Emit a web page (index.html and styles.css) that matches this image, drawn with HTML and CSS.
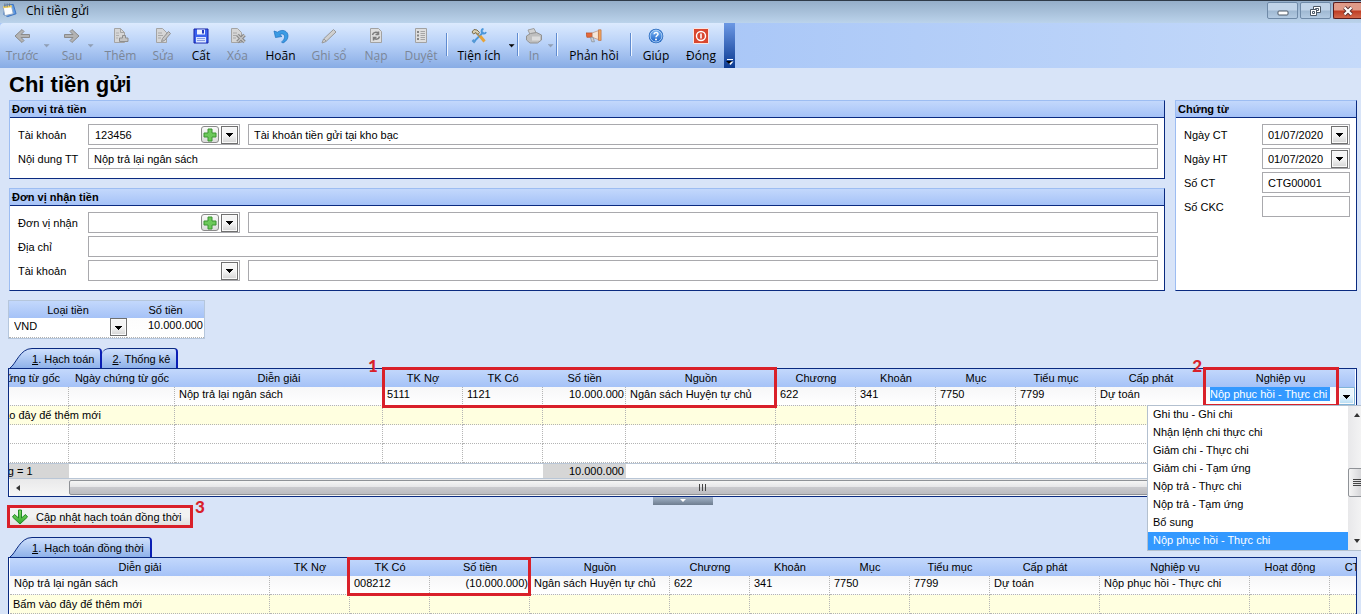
FILE: index.html
```html
<!DOCTYPE html>
<html lang="vi">
<head>
<meta charset="utf-8">
<title>Chi tiền gửi</title>
<link rel="stylesheet" href="styles.css">
</head>
<body>
<svg class="defs" aria-hidden="true">
  <defs>
    <linearGradient id="gTab" x1="0" y1="0" x2="0" y2="1"><stop offset="0" stop-color="#cfe0fc"/><stop offset="1" stop-color="#8fb2ea"/></linearGradient>
    <linearGradient id="gGreen" x1="0" y1="0" x2="0" y2="1"><stop offset="0" stop-color="#8be06a"/><stop offset="1" stop-color="#2fa52c"/></linearGradient>
    <linearGradient id="gHelp" x1="0" y1="0" x2="0" y2="1"><stop offset="0" stop-color="#7fb8f4"/><stop offset="1" stop-color="#1b63c8"/></linearGradient>
    <symbol id="plus" viewBox="0 0 14 14"><path d="M5 1h4v4h4v4H9v4H5V9H1V5h4z" fill="#6cc95a" stroke="#3a9430"/></symbol>
    <symbol id="caret" viewBox="0 0 8 5"><path d="M0 0h7v1H6v1H5v1H4v1H3V3H2V2H1V1H0z" fill="currentColor"/></symbol>
  </defs>
</svg>

<header class="titlebar">
  <svg class="app-icon" viewBox="0 0 16 16"><path d="M3 3l9-1 3 10-9 3-4-2z" fill="#5d9be6" stroke="#3a6fbd"/><path d="M1 4l9-1 2 9-9 2z" fill="#fdfdfd" stroke="#8fa6c4"/><path d="M1 4l9-1 .5 2L1.500 6z" fill="#f3cf58"/><path d="M3 1v4M5.500 1v4M8 1v3" stroke="#69788c"/></svg>
  <span class="titlebar-text">Chi tiền gửi</span>
  <button class="win-btn" aria-label="Thu nhỏ"><svg width="12" height="12" viewBox="0 0 12 12"><rect x="1" y="6" width="10" height="4" rx="1" fill="#fff" stroke="#4c5866"/></svg></button>
  <button class="win-btn" aria-label="Khôi phục"><svg width="13" height="12" viewBox="0 0 13 12"><path d="M4.500 1.500h7v6h-7z" fill="#fff" stroke="#4c5866"/><path d="M6.500 3.500h3v2h-3z" fill="none" stroke="#4c5866"/><path d="M1.500 4.500h6v6h-6z" fill="#fff" stroke="#4c5866"/><path d="M3.500 6.500h2v2h-2z" fill="none" stroke="#4c5866"/></svg></button>
  <button class="win-btn win-close" aria-label="Đóng cửa sổ"><svg width="12" height="10" viewBox="0 0 12 10"><path d="M2.500 1.500l7 7M9.500 1.500l-7 7" stroke="#5b3030" stroke-width="4"/><path d="M2.500 1.500l7 7M9.500 1.500l-7 7" stroke="#fff" stroke-width="2.200"/></svg></button>
</header>

<nav class="toolbar-row">
  <div class="toolbar">
    <button class="tool" disabled><svg viewBox="0 0 16 16"><path d="M8 1.500L1 8l7 6.500 2-2-3-3h8.500v-3H7l3-3z" fill="#b3b3b3" stroke="#8b8b8b"/></svg>Trước</button>
    <span class="drop off"><svg><use href="#caret"/></svg></span>
    <button class="tool" disabled><svg viewBox="0 0 16 16"><path d="M8 1.500L15 8l-7 6.500-2-2 3-3H.5v-3H9l-3-3z" fill="#b3b3b3" stroke="#8b8b8b"/></svg>Sau</button>
    <span class="drop off"><svg><use href="#caret"/></svg></span>
    <button class="tool" disabled><svg viewBox="0 0 16 16"><path d="M1.500 .5h6l4 4v10h-10z" fill="#d6d6d6" stroke="#a4a4a4"/><path d="M7.500 .5v4h4" fill="none" stroke="#a4a4a4"/><path d="M3 5h3M3 7.500h3M3 10h2" stroke="#b0b0b0"/><path d="M9.500 7.500h3v2.500H15v3.500H6.500V10h3z" fill="#c4c4c4" stroke="#8f8f8f"/></svg>Thêm</button>
    <button class="tool" disabled><svg viewBox="0 0 16 16"><path d="M1.500 .5h6l4 4v10h-10z" fill="#d6d6d6" stroke="#a4a4a4"/><path d="M3 5h4M3 7.500h5M3 10h3" stroke="#a8a8a8"/><path d="M13.500 3.500l2 2-6 7-3 1 1-3z" fill="#c6c6c6" stroke="#909090"/></svg>Sửa</button>
    <button class="tool"><svg viewBox="0 0 16 16"><path d="M1 1h14v14H1z" fill="#3b63ee" stroke="#1720a5"/><path d="M4 1.500h8v5H4z" fill="#eef3ff"/><path d="M9 2h2v3.500H9z" fill="#2338bd"/><path d="M3 9h10v5.500H3z" fill="#dbe6ff"/><path d="M4 10.500h8M4 12.500h8" stroke="#879be0"/></svg>Cất</button>
    <button class="tool" disabled><svg viewBox="0 0 16 16"><path d="M1.500 .5h6l4 4v10h-10z" fill="#d6d6d6" stroke="#a4a4a4"/><path d="M3 5h4M3 7.500h4M3 10h3" stroke="#a8a8a8"/><path d="M7.500 7l7 7M14.500 7l-7 7" stroke="#858585" stroke-width="3.500"/><path d="M7.500 7l7 7M14.500 7l-7 7" stroke="#c4c4c4" stroke-width="1.500"/></svg>Xóa</button>
    <button class="tool"><svg viewBox="0 0 16 16"><path d="M1 3l1.500 6.500L9 8.500 6.800 6.600C9.500 5 12 6.500 11.500 9.500c-.3 2-1.500 3.500-3 4.500l1.500 1c3-1.500 5-4 5-7C15 3 9.500.500 4.500 4.200z" fill="#3a9be4" stroke="#1c6fbd" stroke-width=".7"/></svg>Hoãn</button>
    <button class="tool" disabled><svg viewBox="0 0 16 16"><path d="M12.500 1.500l2.500 2.500-10 9.500-4 1.500 1.500-4z" fill="#d0d0d0" stroke="#989898"/><path d="M3 11l2 2" stroke="#989898"/></svg>Ghi sổ</button>
    <button class="tool" disabled><svg viewBox="0 0 16 16"><path d="M2.500 .5h8l3 3v11h-11z" fill="#dedede" stroke="#a2a2a2"/><path d="M4.500 7c.7-3 4-3.500 6-1.500V3.500M11.500 8.500c-.7 3-4 3.500-6 1.500v2.500M10.500 6.500h-3M5.500 9.500h3" fill="none" stroke="#7c7c7c" stroke-width="1.500"/></svg>Nạp</button>
    <button class="tool" disabled><svg viewBox="0 0 16 16"><path d="M2.500 .5h11v14h-11z" fill="#dedede" stroke="#a2a2a2"/><path d="M4 4h2M4 7.500h2M4 11h2" stroke="#858585" stroke-width="2"/><path d="M7.500 3.500h4.500M7.500 5.500h4.500M7.500 7.500h4.500M7.500 9.500h4.500M7.500 11.500h4.500" stroke="#a5a5a5"/></svg>Duyệt</button>
    <span class="sep"></span>
    <button class="tool"><svg viewBox="0 0 16 16"><path d="M3 13.500L12.500 4M12.500 1a2.300 2.300 0 1 0 2.500 3" fill="none" stroke="#4b97da" stroke-width="1.800"/><path d="M9 8l4.500 5.500" stroke="#e6a33a" stroke-width="3"/><path d="M5 5l4 4" stroke="#b98f45" stroke-width="1.500"/><path d="M1 4l2-2.500 3 .5 2.500 2.500-1.500 2-2-2L2.500 6z" fill="#d9d1b4" stroke="#7b6c49"/><path d="M1.500 12l2.500 2.500" stroke="#5599d5" stroke-width="2.500"/></svg>Tiện ích</button>
    <span class="drop"><svg><use href="#caret"/></svg></span>
    <span class="sep"></span>
    <button class="tool" disabled><svg viewBox="0 0 16 16"><path d="M2 2l6-1.500 2.500 5-6 2z" fill="#d2d2d2" stroke="#9d9d9d"/><path d="M.5 8l4-2.500 6-1 5 2.500v5l-4 3H4l-3.500-3z" fill="#bfbfbf" stroke="#929292"/><path d="M6 8.500h8v4H6z" fill="#dcdcdc"/></svg>In</button>
    <span class="drop off"><svg><use href="#caret"/></svg></span>
    <span class="sep"></span>
    <button class="tool"><svg viewBox="0 0 18 16"><path d="M0 4.500h7v5H1z" fill="#e5683a" stroke="#b2471b" stroke-width=".7"/><path d="M7 4.500L14 2v10L7 9.500z" fill="#f4e6d8" stroke="#b98467" stroke-width=".7"/><path d="M14 1h3v12h-3z" fill="#f0a35c" stroke="#b8673a" stroke-width=".7"/><path d="M5 9.500h3l1.500 5H6.500z" fill="#c9cdd2" stroke="#7d858e" stroke-width=".7"/></svg>Phản hồi</button>
    <span class="sep"></span>
    <button class="tool"><svg viewBox="0 0 16 16"><circle cx="8" cy="8" r="7.300" fill="#2065bd"/><circle cx="8" cy="8" r="6" fill="url(#gHelp)" stroke="#cce4ff" stroke-width=".8"/><path d="M6 6.300C6.200 3.600 10.300 4 10 6.300c-.2 1.200-2 1.400-2 3" fill="none" stroke="#fff" stroke-width="1.500"/><circle cx="8" cy="11.500" r="1" fill="#fff"/></svg>Giúp</button>
    <button class="tool"><svg viewBox="0 0 16 16"><path d="M.5 .5h15v15H.5z" fill="#d9472f" stroke="#fbe4df"/><circle cx="8" cy="8" r="4.500" fill="none" stroke="#fff" stroke-width="1.400"/><path d="M8 5.500v5" stroke="#fff" stroke-width="1.600"/></svg>Đóng</button>
  </div>
  <button class="toolbar-more" aria-label="Tùy chọn thanh công cụ"><svg width="8" height="8" viewBox="0 0 8 8"><path d="M1 1.500h6" stroke="#fff"/><path d="M1 3.500h6.500L4.500 7z" fill="#fff"/><path d="M0 3h6L3 6z" fill="#000"/></svg></button>
</nav>

<main class="content">
  <h1 class="page-title">Chi tiền gửi</h1>

  <div class="forms">
    <div class="forms-main">
      <section class="panel">
        <h2 class="panel-head">Đơn vị trả tiền</h2>
        <div class="panel-body">
          <div class="row">
            <label class="label" for="acc">Tài khoản</label>
            <div class="field combo"><input id="acc" class="wide-pad" value="123456"><button class="add" aria-label="Thêm tài khoản"><svg><use href="#plus"/></svg></button><button class="arrow" aria-label="Chọn tài khoản"><svg><use href="#caret"/></svg></button></div>
            <div class="field grow"><input aria-label="Tên tài khoản" value="Tài khoản tiền gửi tại kho bạc"></div>
          </div>
          <div class="row">
            <label class="label" for="desc">Nội dung TT</label>
            <div class="field grow"><input id="desc" value="Nộp trả lại ngân sách"></div>
          </div>
        </div>
      </section>
      <section class="panel">
        <h2 class="panel-head">Đơn vị nhận tiền</h2>
        <div class="panel-body">
          <div class="row">
            <label class="label" for="recv">Đơn vị nhận</label>
            <div class="field combo"><input id="recv"><button class="add" aria-label="Thêm đơn vị"><svg><use href="#plus"/></svg></button><button class="arrow" aria-label="Chọn đơn vị"><svg><use href="#caret"/></svg></button></div>
            <div class="field grow"><input aria-label="Tên đơn vị nhận"></div>
          </div>
          <div class="row">
            <label class="label" for="addr">Địa chỉ</label>
            <div class="field grow"><input id="addr"></div>
          </div>
          <div class="row">
            <label class="label" for="racc">Tài khoản</label>
            <div class="field combo"><select id="racc"><option></option></select><span class="arrow"><svg><use href="#caret"/></svg></span></div>
            <div class="field grow"><input aria-label="Tên tài khoản nhận"></div>
          </div>
        </div>
      </section>
    </div>
    <section class="panel panel-side">
      <h2 class="panel-head">Chứng từ</h2>
      <div class="panel-body">
        <div class="row"><label class="label" for="d1">Ngày CT</label><div class="field grow"><input id="d1" value="01/07/2020"><button class="arrow" aria-label="Chọn ngày CT"><svg><use href="#caret"/></svg></button></div></div>
        <div class="row"><label class="label" for="d2">Ngày HT</label><div class="field grow"><input id="d2" value="01/07/2020"><button class="arrow" aria-label="Chọn ngày HT"><svg><use href="#caret"/></svg></button></div></div>
        <div class="row"><label class="label" for="n1">Số CT</label><div class="field grow"><input id="n1" value="CTG00001"></div></div>
        <div class="row"><label class="label" for="n2">Số CKC</label><div class="field grow"><input id="n2"></div></div>
      </div>
    </section>
  </div>

  <table class="currency">
    <colgroup><col class="w-cur"><col></colgroup>
    <thead><tr><th>Loại tiền</th><th>Số tiền</th></tr></thead>
    <tbody><tr><td><div class="cur-select"><select aria-label="Loại tiền"><option>VND</option></select><span class="arrow"><svg><use href="#caret"/></svg></span></div></td><td class="num">10.000.000</td></tr></tbody>
  </table>

  <div class="tabs">
    <button class="tab"><svg class="slant" viewBox="0 0 22 20"><path d="M0 20C6 16 10 .5 22 .5V20z" fill="url(#gTab)"/><path d="M0 20C6 16 10 .5 22 .5" fill="none" stroke="#0a2a80"/></svg><span class="tab-text"><u>1</u>. Hạch toán</span></button>
    <button class="tab second"><span class="tab-text"><u>2</u>. Thống kê</span></button>
  </div>
  <div class="grid">
    <div class="grid-view">
      <table class="data scrolled">
        <colgroup><col class="w100"><col class="w106"><col class="w208"><col class="w80"><col class="w80"><col class="w83"><col class="w150"><col class="w80"><col class="w80"><col class="w80"><col class="w80"><col class="w110"><col></colgroup>
        <thead><tr><th>Số chứng từ gốc</th><th>Ngày chứng từ gốc</th><th>Diễn giải</th><th>TK Nợ</th><th>TK Có</th><th>Số tiền</th><th>Nguồn</th><th>Chương</th><th>Khoản</th><th>Mục</th><th>Tiểu mục</th><th>Cấp phát</th><th>Nghiệp vụ</th></tr></thead>
        <tbody>
          <tr class="entry"><td></td><td></td><td>Nộp trả lại ngân sách</td><td>5111</td><td>1121</td><td class="num">10.000.000</td><td>Ngân sách Huyện tự chủ</td><td>622</td><td>341</td><td>7750</td><td>7799</td><td>Dự toán</td><td><div class="cell-edit"><input aria-label="Nghiệp vụ" value="Nộp phục hồi - Thực chi"><button class="arrow hot" aria-label="Mở danh sách nghiệp vụ"><svg><use href="#caret"/></svg></button></div></td></tr>
          <tr class="new"><td class="spill">Bấm vào đây để thêm mới</td><td></td><td></td><td></td><td></td><td></td><td></td><td></td><td></td><td></td><td></td><td></td><td></td></tr>
          <tr><td></td><td></td><td></td><td></td><td></td><td></td><td></td><td></td><td></td><td></td><td></td><td></td><td></td></tr>
          <tr><td></td><td></td><td></td><td></td><td></td><td></td><td></td><td></td><td></td><td></td><td></td><td></td><td></td></tr>
        </tbody>
        <tfoot><tr><td class="sum">Số dòng = 1</td><td colspan="4"></td><td class="sum num">10.000.000</td><td colspan="7"></td></tr></tfoot>
      </table>
      <div class="hscroll"><span class="hs-arrow"></span><span class="hs-thumb"><i></i><i></i><i></i></span></div>
    </div>
    <span class="mark mark-a"></span><b class="mark-no no-a">1</b>
    <span class="mark mark-b"></span><b class="mark-no no-b">2</b>
    <div class="popup">
      <ul class="options" role="listbox" aria-label="Nghiệp vụ">
        <li role="option">Ghi thu - Ghi chi</li>
        <li role="option">Nhận lệnh chi thực chi</li>
        <li role="option">Giảm chi - Thực chi</li>
        <li role="option">Giảm chi - Tạm ứng</li>
        <li role="option">Nộp trả - Thực chi</li>
        <li role="option">Nộp trả - Tạm ứng</li>
        <li role="option">Bổ sung</li>
        <li role="option" aria-selected="true" class="selected">Nộp phục hồi - Thực chi</li>
      </ul>
      <div class="vscroll"><span class="vs-up"></span><span class="vs-thumb"><i></i><i></i><i></i><i></i></span><span class="vs-down"></span></div>
    </div>
  </div>

  <div class="splitter"><span class="splitter-grip"><i></i></span></div>

  <div class="action">
    <button class="update"><svg width="16" height="16" viewBox="0 0 16 16"><path d="M6.500 1h3v8l4-3.500L15.500 8 8 15 .5 8l2-2.500 4 3.500z" fill="url(#gGreen)" stroke="#218a22"/></svg>Cập nhật hạch toán đồng thời</button>
    <span class="mark mark-c"></span><b class="mark-no no-c">3</b>
  </div>

  <div class="tabs">
    <button class="tab"><svg class="slant" viewBox="0 0 22 20"><path d="M0 20C6 16 10 .5 22 .5V20z" fill="url(#gTab)"/><path d="M0 20C6 16 10 .5 22 .5" fill="none" stroke="#0a2a80"/></svg><span class="tab-text"><u>1</u>. Hạch toán đồng thời</span></button>
  </div>
  <div class="grid">
    <div class="grid-view">
      <table class="data">
        <colgroup><col class="w260"><col class="w80"><col class="w80"><col class="w100"><col class="w140"><col class="w80"><col class="w80"><col class="w80"><col class="w80"><col class="w110"><col class="w150"><col class="w80"><col class="w80"></colgroup>
        <thead><tr><th>Diễn giải</th><th>TK Nợ</th><th>TK Có</th><th>Số tiền</th><th>Nguồn</th><th>Chương</th><th>Khoản</th><th>Mục</th><th>Tiểu mục</th><th>Cấp phát</th><th>Nghiệp vụ</th><th>Hoạt động</th><th>CTMT, DA</th></tr></thead>
        <tbody>
          <tr class="entry"><td>Nộp trả lại ngân sách</td><td></td><td>008212</td><td class="num">(10.000.000)</td><td>Ngân sách Huyện tự chủ</td><td>622</td><td>341</td><td>7750</td><td>7799</td><td>Dự toán</td><td>Nộp phục hồi - Thực chi</td><td></td><td></td></tr>
          <tr class="new"><td>Bấm vào đây để thêm mới</td><td></td><td></td><td></td><td></td><td></td><td></td><td></td><td></td><td></td><td></td><td></td><td></td></tr>
        </tbody>
      </table>
    </div>
    <span class="mark mark-d"></span>
  </div>
</main>
</body>
</html>
```

FILE: styles.css
```css
* { box-sizing: border-box; }

html, body { height: 100%; margin: 0; }

body {
  display: flex;
  flex-direction: column;
  overflow: hidden;
  background: #d8e4f8;
  color: #000;
  font: 11px/14px "Liberation Sans", Arial, sans-serif;
}

button, input, select {
  margin: 0;
  padding: 0;
  border: 0;
  background: none;
  color: inherit;
  font: inherit;
  border-radius: 0;
}

select { appearance: none; }
svg { display: block; }
.defs { position: absolute; width: 0; height: 0; }

/* Title bar */
.titlebar {
  display: flex;
  flex: none;
  height: 23px;
  border-top: 1px solid #2f3a48;
  padding-left: 2px;
  background: linear-gradient(#95aec9, #bbd3eb);
}
.app-icon { width: 15px; height: 16px; margin-top: 1px; }
.titlebar-text {
  flex: 1;
  padding-left: 9px;
  font: 12px/20px "Open Sans", "Noto Sans", sans-serif;
}
.win-btn {
  display: flex;
  align-items: center;
  justify-content: center;
  width: 31px;
  height: 17px;
  margin: 1px 2px 0 0;
  border: 1px solid #6f8aa8;
  border-radius: 2px;
  background: linear-gradient(#c0d3e8 48%, #9fb8d2 52%, #b3cae2);
}
.win-close {
  width: 28px;
  margin-right: 0;
  border-color: #5a1c1c;
  border-right: 0;
  border-radius: 2px 0 0 2px;
  background: linear-gradient(#e09a88 48%, #bf3b22 52%, #d2684c);
}

/* Toolbar */
.toolbar-row {
  display: flex;
  flex: none;
  height: 45px;
  background: linear-gradient(90deg, #a8c6f7 50%, #c5dafa);
}
.toolbar {
  display: grid;
  grid-template-columns: 40px 16px 28px 12px 45px 40px 36px 37px 49px 48px 46px 44px 8px 56px 7px 8px 24px 7px 8px 66px 8px 42px 48px;
  width: 724px;
  padding-left: 2px;
  border-radius: 4px 0 0 0;
  background: linear-gradient(#dceafe, #b9d2f8 45%, #88ace5);
}
.tool {
  display: flex;
  flex-direction: column;
  align-items: center;
  padding-top: 5px;
  white-space: nowrap;
  font: 12px/16px "Open Sans", "Noto Sans", sans-serif;
}
.tool svg { width: 16px; height: 16px; margin-bottom: 4px; }
.tool:disabled { color: #7b8697; }
.drop { padding: 21px 0 0 2px; }
.drop svg { width: 6px; height: 4px; }
.off { color: #8f9db3; }
.sep {
  width: 2px;
  height: 23px;
  margin: 10px 0 0 3px;
  border-left: 1px solid #5f8bd0;
  border-right: 1px solid #eef5ff;
}
.toolbar-more {
  display: flex;
  align-items: flex-end;
  justify-content: center;
  width: 11px;
  padding-bottom: 2px;
  background: linear-gradient(#6c98e4, #0b3a92);
}

/* Content */
.content {
  display: flex;
  flex: 1;
  flex-direction: column;
  min-height: 0;
  padding: 0 4px 0 8px;
}
.page-title {
  flex: none;
  height: 32px;
  margin: 0;
  padding-left: 1px;
  font: bold 22px/33px "Liberation Sans", Arial, sans-serif;
}
.forms { display: flex; flex: none; gap: 10px; padding-left: 1px; }
.forms-main { display: flex; flex: 1; flex-direction: column; gap: 9px; min-width: 0; }
.panel {
  border: 1px solid #9dbdf2;
  border-right-color: #0a2a80;
  border-bottom-color: #0a2a80;
  background: #fff;
}
.panel-side { width: 182px; }
.panel-head {
  height: 17px;
  margin: 0;
  padding-left: 2px;
  border-bottom: 1px solid #0a2a80;
  background: linear-gradient(#c3d8fc, #a5c2f7);
  font: bold 11px/16px "Liberation Sans", Arial, sans-serif;
}
.panel-body {
  display: flex;
  flex-direction: column;
  gap: 3px;
  padding: 6px 6px 9px 8px;
}
.row { display: flex; align-items: center; }
.label { width: 70px; white-space: nowrap; }
.panel-side .label { width: 78px; }
.field {
  display: flex;
  align-items: center;
  height: 21px;
  padding: 0 1px 0 5px;
  border: 1px solid #a9a9ad;
  background: #fff;
}
.field input, .field select { flex: 1; min-width: 0; height: 17px; }
.field .wide-pad { padding-left: 1px; }
.combo { width: 152px; margin-right: 8px; }
.grow { flex: 1; min-width: 0; }
.arrow {
  display: flex;
  align-items: center;
  justify-content: center;
  flex: none;
  width: 17px;
  height: 18px;
  padding-top: 2px;
  border: 1px solid #707070;
  background: linear-gradient(#f5f5f5 50%, #d4d4d4);
  box-shadow: inset 0 0 0 1px #fafafa;
}
.arrow svg { width: 8px; height: 5px; }
.add {
  display: flex;
  align-items: center;
  justify-content: center;
  width: 18px;
  height: 17px;
  margin-right: 2px;
  border: 1px solid #8a8a8a;
  border-radius: 3px;
  background: linear-gradient(#fafafa, #dcdcdc);
}
.add svg { width: 14px; height: 14px; }

/* Currency table */
.currency {
  flex: none;
  width: 197px;
  margin: 9px 0;
  border: 1px solid #b5c6dc;
  border-spacing: 0;
  table-layout: fixed;
  background: linear-gradient(#fafafa, #fff);
}
.w-cur { width: 118px; }
.currency th {
  height: 17px;
  padding: 0;
  background: linear-gradient(#c3d8fc, #a5c2f7);
  font-weight: normal;
}
.currency td {
  height: 20px;
  padding: 0;
  border-bottom: 1px dotted #b0b0b0;
  vertical-align: top;
}
.currency .num { padding-right: 1px; text-align: right; }
.cur-select { display: flex; height: 19px; padding-left: 5px; background: #fff; }
.cur-select select { flex: 1; height: 16px; }

/* Tabs */
.tabs { display: flex; flex: none; height: 20px; padding-left: 2px; }
.tab { display: flex; }
.slant { width: 22px; height: 20px; }
.tab-text {
  height: 20px;
  padding: 0 6px 0 0;
  border-top: 1px solid #0a2a80;
  border-right: 2px solid #0a1eb4;
  border-top-right-radius: 4px;
  background: linear-gradient(#cfe0fc, #8fb2ea);
  line-height: 20px;
  white-space: nowrap;
}
.second .tab-text {
  padding-left: 10px;
  border-top-left-radius: 8px 6px;
}

/* Data grids */
.grid {
  position: relative;
  flex: none;
  border: 1px solid #0a2a80;
}
.grid-view { overflow: hidden; padding: 0 1px; background: #fff; }
.data {
  width: 100%;
  border-spacing: 0;
  table-layout: fixed;
  white-space: nowrap;
}
.scrolled { width: calc(100% + 41px); margin-left: -41px; }
.w80 { width: 80px; }
.w83 { width: 83px; }
.w100 { width: 100px; }
.w106 { width: 106px; }
.w110 { width: 110px; }
.w140 { width: 140px; }
.w150 { width: 150px; }
.w208 { width: 208px; }
.w260 { width: 260px; }
.data th {
  height: 18px;
  padding: 0;
  background: linear-gradient(#c3d8fc, #a5c2f7);
  font-weight: normal;
}
.data tbody td {
  height: 19px;
  padding: 0 0 0 4px;
  border-right: 1px dotted #b4b4b4;
  border-bottom: 1px dotted #b4b4b4;
}
.data .entry td { background: linear-gradient(#f7f7f8, #fff); vertical-align: top; }
.data .new td { padding-left: 3px; background: #ffffe0; }
.data .num { padding: 0 1px 0 0; text-align: right; }
.data tbody tr td:last-child { border-right: 0; }
.data tfoot td {
  height: 16px;
  padding: 0 0 0 4px;
  border-top: 1px solid #b9c6d6;
  border-bottom: 1px solid #b9c6d6;
  line-height: 12px;
}
.data tfoot .sum { background: #d6d6d6; }
.data tfoot .num { padding: 0 2px 0 0; }
.cell-edit { display: flex; justify-content: space-between; height: 18px; }
.cell-edit input { width: 120px; height: 14px; background: #3399ff; color: #fff; }
.arrow.hot { border-color: #7fb3d8; background: linear-gradient(#eaf6fd 50%, #b5dcf4); }

.hscroll {
  display: flex;
  align-items: center;
  height: 17px;
  padding: 0 19px 0 6px;
  background: linear-gradient(#e9e9ea, #f6f6f6);
}
.hs-arrow {
  width: 53px;
}
.hs-arrow::before {
  content: "";
  display: block;
  width: 0;
  border: 3px solid transparent;
  border-left: 0;
  border-right: 4px solid #333;
}
.hs-thumb {
  display: flex;
  flex: 1;
  align-items: center;
  justify-content: center;
  gap: 2px;
  height: 15px;
  border: 1px solid #8f9297;
  border-radius: 2px;
  background: linear-gradient(#f5f5f5, #e6e6e8 45%, #c9c9cd 50%, #bdbdc1);
}
.hs-thumb i { width: 1px; height: 7px; background: #444; }

/* Callouts */
.mark { position: absolute; border: 3px solid #d9202a; pointer-events: none; }
.mark-no { position: absolute; color: #d9202a; font: 900 17px/18px Lato, sans-serif; }
.mark-a { left: 373px; top: -2px; width: 395px; height: 41px; }
.no-a { left: 359px; top: -12px; }
.mark-b { right: 17px; top: -2px; width: 136px; height: 40px; }
.no-b { right: 154px; top: -12px; }
.mark-c { left: -1px; top: 0; width: 186px; height: 23px; }
.no-c { left: 187px; top: -7px; }
.mark-d { left: 338px; top: -1px; width: 184px; height: 39px; }

/* Open list */
.popup {
  position: absolute;
  z-index: 2;
  top: 36px;
  right: -10px;
  display: flex;
  width: 219px;
  border: 1px solid #b3c0cf;
  background: #fff;
}
.options { flex: 1; margin: 0; padding: 0; list-style: none; }
.options li { height: 18px; padding-left: 5px; line-height: 17px; }
.options .selected { background: #3399ff; color: #fff; }
.vscroll {
  display: flex;
  flex-direction: column;
  align-items: center;
  justify-content: space-between;
  width: 17px;
  padding: 7px 0;
  background: linear-gradient(90deg, #e8e8ea, #f6f6f6);
}
.vs-up, .vs-down { border: 3px solid transparent; }
.vs-up { border-top: 0; border-bottom: 4px solid #333; }
.vs-down { border-bottom: 0; border-top: 4px solid #333; }
.vs-thumb {
  display: flex;
  flex-direction: column;
  align-items: center;
  justify-content: center;
  gap: 1px;
  width: 17px;
  height: 29px;
  border: 1px solid #8f9297;
  border-radius: 2px;
  margin-top: 8px;
  background: linear-gradient(90deg, #f5f5f5, #cfcfd2);
}
.vs-thumb i { width: 8px; height: 1px; background: #444; }

/* Splitter and action */
.splitter { display: flex; flex: none; justify-content: center; height: 8px; }
.splitter-grip {
  display: flex;
  justify-content: center;
  width: 60px;
  height: 8px;
  padding-top: 2px;
  background: linear-gradient(#a3b3c8, #6e7d90);
}
.splitter-grip i { height: 0; border: 3px solid transparent; border-top-color: #fff; border-bottom: 0; }
.action { position: relative; flex: none; height: 32px; }
.update {
  display: flex;
  align-items: center;
  gap: 8px;
  width: 184px;
  height: 23px;
  padding-left: 4px;
  background: linear-gradient(#f2f2f2 50%, #d9d9d9);
  white-space: nowrap;
}
```
